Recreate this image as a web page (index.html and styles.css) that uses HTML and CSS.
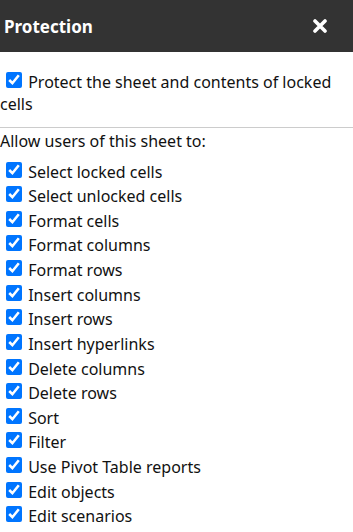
FILE: index.html
```html
<!DOCTYPE html>
<html>
<head>
<meta charset="utf-8">
<link rel="stylesheet" href="styles.css">
</head>
<body>
<div class="dialog">
  <div class="header">
    <span class="title">Protection</span>
    <span class="close" aria-label="close">
      <svg width="14" height="14" viewBox="0 0 14 14"><path d="M2 2 L12 12 M12 2 L2 12" stroke="#fff" stroke-width="3.6" stroke-linecap="round"/></svg>
    </span>
  </div>
  <div class="protect">
    <label><input type="checkbox" checked> Protect the sheet and contents of locked cells</label>
  </div>
  <div class="allow">Allow users of this sheet to:</div>
  <ul class="opts">
    <li><label><input type="checkbox" checked> Select locked cells</label></li>
    <li><label><input type="checkbox" checked> Select unlocked cells</label></li>
    <li><label><input type="checkbox" checked> Format cells</label></li>
    <li><label><input type="checkbox" checked> Format columns</label></li>
    <li><label><input type="checkbox" checked> Format rows</label></li>
    <li><label><input type="checkbox" checked> Insert columns</label></li>
    <li><label><input type="checkbox" checked> Insert rows</label></li>
    <li><label><input type="checkbox" checked> Insert hyperlinks</label></li>
    <li><label><input type="checkbox" checked> Delete columns</label></li>
    <li><label><input type="checkbox" checked> Delete rows</label></li>
    <li><label><input type="checkbox" checked> Sort</label></li>
    <li><label><input type="checkbox" checked> Filter</label></li>
    <li><label><input type="checkbox" checked> Use Pivot Table reports</label></li>
    <li><label><input type="checkbox" checked> Edit objects</label></li>
    <li><label><input type="checkbox" checked> Edit scenarios</label></li>
  </ul>
</div>
</body>
</html>
```
FILE: styles.css
```css
html, body {
  margin: 0;
  padding: 0;
  background: #fff;
}
body {
  font-family: "Noto Sans", "Noto Sans CJK KR", sans-serif;
  font-size: 16px;
  color: #111;
}
.header {
  height: 52px;
  background: #333;
  display: flex;
  align-items: center;
  justify-content: space-between;
  padding: 0 26px 0 4px;
}
.title {
  color: #fff;
  font-weight: bold;
  font-size: 17px;
}
.close {
  display: flex;
  align-items: center;
}
.protect {
  padding: 19px 0 12px 0;
  border-bottom: 1px solid #ccc;
  line-height: 22px;
}
.allow {
  line-height: 24px;
  padding-top: 1px;
}
input[type=checkbox] {
  width: 16px;
  height: 16px;
  margin: 0 2px 1px 6px;
  vertical-align: baseline;
}
.opts {
  list-style: none;
  margin: 0;
  padding: 6.5px 0 0 0;
}
.opts li {
  height: 24.64px;
  line-height: 24.64px;
}
```
